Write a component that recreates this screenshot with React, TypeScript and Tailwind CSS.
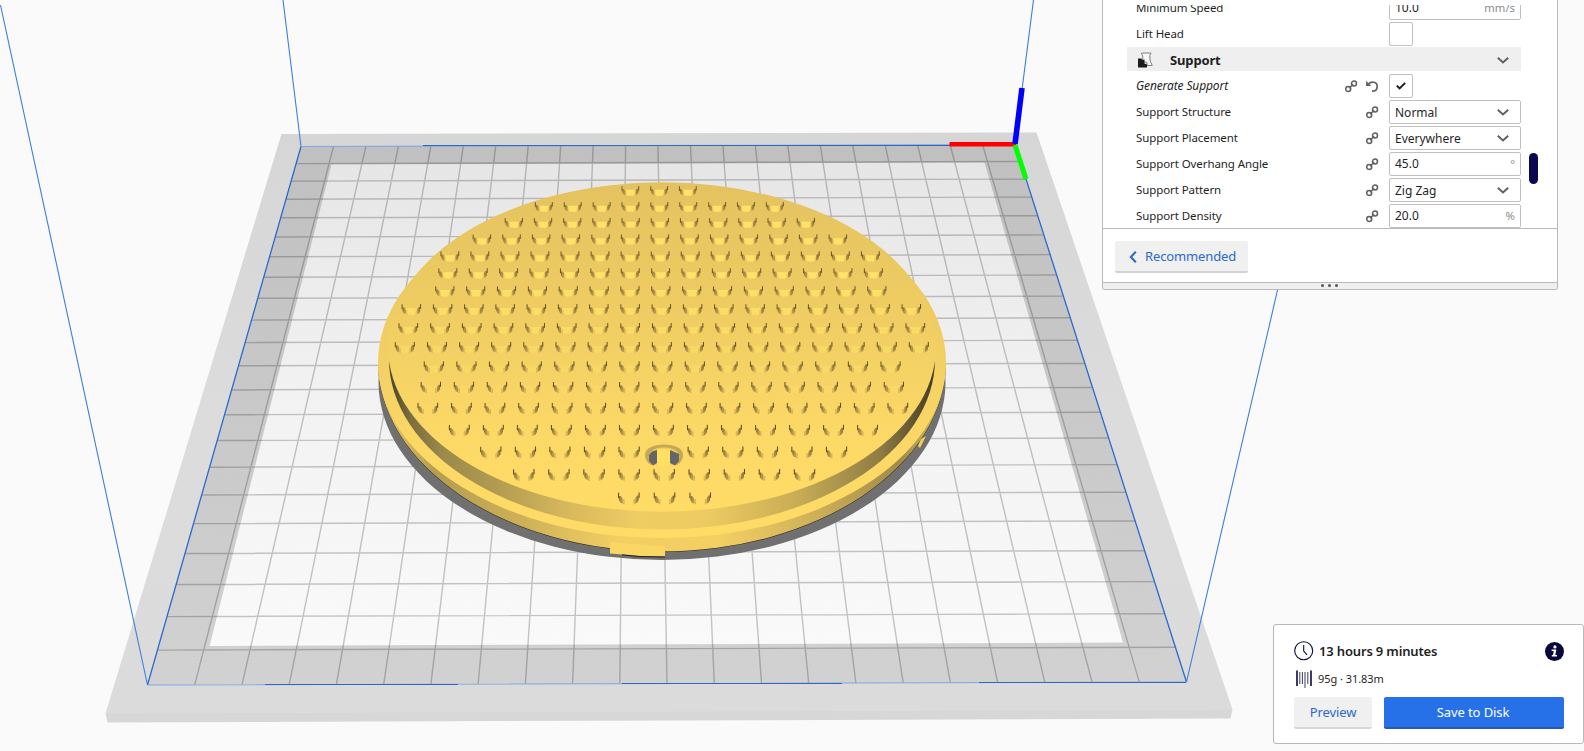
import React from "react";

type Pt = [number, number];

// Build-plate corners on screen; 22 x 22 cells of 10 mm.
const TL: Pt = [301, 146.5];
const TR: Pt = [1015, 144.5];
const BR: Pt = [1186.5, 682];
const BL: Pt = [147.5, 685];
const CELLS = 22;

function makeProjector(p0: Pt, p1: Pt, p2: Pt, p3: Pt) {
  const dx1 = p1[0] - p2[0];
  const dx2 = p3[0] - p2[0];
  const dx3 = p0[0] - p1[0] + p2[0] - p3[0];
  const dy1 = p1[1] - p2[1];
  const dy2 = p3[1] - p2[1];
  const dy3 = p0[1] - p1[1] + p2[1] - p3[1];
  const den = dx1 * dy2 - dx2 * dy1;
  const g = (dx3 * dy2 - dx2 * dy3) / den;
  const h = (dx1 * dy3 - dx3 * dy1) / den;
  const a = p1[0] - p0[0] + g * p1[0];
  const b = p3[0] - p0[0] + h * p3[0];
  const d = p1[1] - p0[1] + g * p1[1];
  const e = p3[1] - p0[1] + h * p3[1];
  return (u: number, v: number): Pt => {
    const w = g * u + h * v + 1;
    return [(a * u + b * v + p0[0]) / w, (d * u + e * v + p0[1]) / w];
  };
}

const project = makeProjector(TL, TR, BR, BL);

function gridPath(step: number) {
  let d = "";
  for (let i = step; i < CELLS - 0.001; i += step) {
    const t = i / CELLS;
    const [ax, ay] = project(t, 0);
    const [bx, by] = project(t, 1);
    const [cx, cy] = project(0, t);
    const [ex, ey] = project(1, t);
    d += `M${ax.toFixed(1)} ${ay.toFixed(1)}L${bx.toFixed(1)} ${by.toFixed(1)}`;
    d += `M${cx.toFixed(1)} ${cy.toFixed(1)}L${ex.toFixed(1)} ${ey.toFixed(1)}`;
  }
  return d;
}

// y, first x, last x, count
const PIN_ROWS: [number, number, number, number][] = [
  [191, 630.5, 688, 3],
  [207, 544, 775, 9],
  [223, 514, 806, 11],
  [239.5, 482, 838, 13],
  [256.5, 450, 870.5, 15],
  [273.5, 448, 873.5, 15],
  [291.5, 445, 877, 15],
  [309.5, 411.5, 911.5, 17],
  [328.5, 408.5, 915.5, 17],
  [347.5, 405, 919, 17],
  [367, 434, 890.7, 15],
  [387.5, 431, 894, 15],
  [408.5, 428, 898, 15],
  [430.5, 459.5, 867.7, 13],
  [452.5, 491, 836.7, 11],
  [475, 524, 804.7, 9],
  [498.5, 629, 700.4, 3],
];

function Pin({ x, y, s, t }: { x: number; y: number; s: number; t: number }) {
  return (
    <g transform={`translate(${x.toFixed(1)} ${y.toFixed(1)}) scale(${s.toFixed(2)})`}>
      <path d="M-4.800-1.300H4.800V3.400L3 4.800H-3L-4.800 3.400Z" fill="#ffe268" opacity={1 - t * 0.8} />
      <path d="M-6.200 0.600H-3.600V4.800H-5L-6.200 3.800Z" fill="#d3b056" opacity={0.25 + t * 0.6} />
      <path d="M6.200 0.600H3.600V4.800H5L6.200 3.800Z" fill="#d3b056" opacity={0.25 + t * 0.6} />
      <path d="M-8.200-2H-6.900L-5.400-0.500V3.800H-6.800L-8.200 2Z" fill="#b0924a" />
      <path d="M8-2.400H6.900L5.400-0.700V3.600H6.800L8 1.800Z" fill="#a88b45" />
      <path d="M-8.700-4.800V-0.200M8.400-5V-0.600" stroke="#5d4c28" strokeWidth={0.9} fill="none" />
      <path d="M-7.700-1.800V1.400M7.400-2.200V1.200" stroke="#8a7138" strokeWidth={0.9} fill="none" />
    </g>
  );
}

function Scene() {
  return (
    <svg className="block h-[751px] w-[1584px]" viewBox="0 0 1584 751">
      <defs>
        <linearGradient id="rim" x1="0" y1="0" x2="0" y2="1">
          <stop offset="0" stopColor="#d6d6d6" />
          <stop offset="0.5" stopColor="#dcdcdc" />
          <stop offset="1" stopColor="#dbdbdb" />
        </linearGradient>
        <linearGradient id="edge" x1="0" y1="0" x2="0" y2="1">
          <stop offset="0" stopColor="#c1c1c1" />
          <stop offset="1" stopColor="#d2d2d2" />
        </linearGradient>
        <linearGradient id="bed" x1="0" y1="0" x2="0" y2="1">
          <stop offset="0" stopColor="#e7e7e7" />
          <stop offset="0.5" stopColor="#f3f3f3" />
          <stop offset="1" stopColor="#fafafa" />
        </linearGradient>
        <linearGradient id="top" x1="0" y1="0" x2="0" y2="1">
          <stop offset="0" stopColor="#e4c25f" />
          <stop offset="0.5" stopColor="#f2d063" />
          <stop offset="0.75" stopColor="#fcd866" />
          <stop offset="1" stopColor="#ffdc66" />
        </linearGradient>
        <linearGradient id="wall" x1="0" y1="0" x2="1" y2="0">
          <stop offset="0" stopColor="#4a4228" />
          <stop offset="0.04" stopColor="#7c6e3e" />
          <stop offset="0.1" stopColor="#9b8a4b" />
          <stop offset="0.2" stopColor="#b39c51" />
          <stop offset="0.33" stopColor="#d8b95c" />
          <stop offset="0.46" stopColor="#f0cd63" />
          <stop offset="0.58" stopColor="#eecb62" />
          <stop offset="0.75" stopColor="#c8ac55" />
          <stop offset="0.9" stopColor="#8e7c43" />
          <stop offset="1" stopColor="#453d24" />
        </linearGradient>
        <linearGradient id="side" x1="0" y1="0" x2="1" y2="0">
          <stop offset="0" stopColor="#f3cf63" />
          <stop offset="0.1" stopColor="#b59d50" />
          <stop offset="0.25" stopColor="#cdb057" />
          <stop offset="0.42" stopColor="#f2ce63" />
          <stop offset="0.6" stopColor="#f4d063" />
          <stop offset="0.78" stopColor="#cbae57" />
          <stop offset="0.92" stopColor="#a08a48" />
          <stop offset="1" stopColor="#e6c45f" />
        </linearGradient>
      </defs>
      <rect width="1584" height="751" fill="#fafafa" />
      <path d="M105.500 713L107.500 722.500L1230.500 718.500L1232.500 709Z" fill="#d7d7d7" />
      <path d="M281.500 134L1036.500 132.500L1232.500 709.500L105.500 713.500Z" fill="url(#rim)" />
      <path d="M301 146.500L1015 144.500L1186.500 682L147.500 685Z" fill="url(#edge)" />
      <path d="M331.500 164.500L984.500 162.500L1123 642.500L209.500 646Z" fill="url(#bed)" />
      <path d={gridPath(0.1)} stroke="#000" strokeOpacity="0.016" strokeWidth="0.6" fill="none" />
      <path d={gridPath(1)} stroke="#000" strokeOpacity="0.21" strokeWidth="1.45" fill="none" />

      <g fill="none" stroke="#3b7fdb" strokeWidth="1.1">
        <path d="M0.500 5L147.500 685M283 0L301 146.500M1033.500 0L1015 144.500M1278 288L1186.500 682" />
        <path d="M301 146.500L147.500 685M1015 144.500L1186.500 682" stroke="#2d69c9" strokeWidth="1.300" />
        <path d="M301 146.500L1015 144.500M147.500 685L1186.500 682" stroke="#7ba8e6" />
        <path d="M423 145.500H950M265 684.500H458M622 683.500H842M979 682.500H1186" stroke="#3067c0" />
      </g>

      <path d="M949.500 144.300H1016" stroke="#ff0000" strokeWidth="4.400" />
      <path d="M1015 145L1026 179" stroke="#00ff00" strokeWidth="5" />
      <path d="M1015 144L1022 88" stroke="#0000fb" strokeWidth="5.600" />

      <ellipse cx="662" cy="382" rx="283.500" ry="178" fill="#707070" />
      <path d="M378 361.500A284 190.500 0 0 0 946 361.500Z" fill="#201c12" />
      <path d="M378 361A284 190.500 0 0 0 946 361Z" fill="url(#side)" />
      <ellipse cx="662" cy="362.500" rx="284" ry="175.500" fill="url(#top)" />
      <ellipse cx="662" cy="359" rx="273" ry="170.500" fill="url(#wall)" />
      <ellipse cx="662" cy="347" rx="274" ry="164.700" fill="url(#top)" />
      <path d="M610 542L665 546.500V556.500L640 556L610 553.500Z" fill="#fad664" />
      <path d="M622 554.800L640 556.600L665 557" stroke="#201c12" fill="none" />
      <path d="M918 446L921 439L926 436L920 448Z" fill="#f2cf63" />

      {PIN_ROWS.map(([y, x0, x1, n], r) =>
        Array.from({ length: n }, (_, i) =>
          r === 14 && i === 5 ? null : (
            <Pin
              key={`${r}-${i}`}
              x={x0 + ((x1 - x0) * i) / (n - 1)}
              y={y}
              s={0.98 + r * 0.014}
              t={Math.min(1, Math.max(0, (r - 5) / 7))}
            />
          ),
        ),
      )}

      <path d="M645 455C645 448 654 444.500 664 444.500C674 444.500 683 448 683 455C683 460 680 463 677 465L651 465C648 463 645 460 645 455Z" fill="#c3a855" />
      <path d="M648.500 458C649 450 656 447.500 664 447.500C672 447.500 679 450 679.500 458L676 465H652Z" fill="#efcd62" />
      <path d="M649 455L652 451.500L657 450V463L653 465.500L649 461Z" fill="#666" />
      <path d="M670 450L679 454V461L675 465.500L670 463Z" fill="#666" />
      <path d="M657 449H670V466H657Z" fill="#ffe060" />
    </svg>
  );
}

function LinkIcon() {
  return (
    <svg className="size-[13px] shrink-0" viewBox="0 0 13 13" fill="none" stroke="#5f6062" strokeWidth="1.500">
      <circle cx="3.200" cy="9" r="2.500" />
      <circle cx="9" cy="3.600" r="2.500" />
      <path d="M4 8.300L8.200 4.300" strokeWidth="1.500" />
    </svg>
  );
}

function ResetIcon() {
  return (
    <svg className="size-[13px] shrink-0" viewBox="0 0 13 13" fill="none">
      <path d="M2.500 3.900C5 1.200 11.200 1.300 11.200 6.400C11.200 9.600 9 11.200 6 11.200" stroke="#5f6062" strokeWidth="1.700" />
      <path d="M0.100 0.800V6H5.200Z" fill="#5f6062" />
    </svg>
  );
}

function Chevron() {
  return (
    <svg className="h-[7px] w-[12px] shrink-0" viewBox="0 0 12 7" fill="none" stroke="#5f6062" strokeWidth="2">
      <path d="M0.800 0.800L6 5.500L11.200 0.800" />
    </svg>
  );
}

function Row({
  label,
  italic,
  linked = true,
  reset,
  children,
}: {
  label: string;
  italic?: boolean;
  linked?: boolean;
  reset?: boolean;
  children: React.ReactNode;
}) {
  return (
    <div className="flex h-6 shrink-0 items-center pl-[9px]">
      <span className={italic ? "flex-1 text-[12px] tracking-[-0.12px] italic" : "flex-1 text-[11.500px] tracking-[-0.09px]"}>
        {label}
      </span>
      <span className="mr-[10px] flex gap-[8px]">
        {linked && <LinkIcon />}
        {reset && <ResetIcon />}
      </span>
      <div className="flex w-[132px]">{children}</div>
    </div>
  );
}

function Field({ value, unit, select }: { value: string; unit?: string; select?: boolean }) {
  return (
    <div
      className={
        select
          ? "flex h-6 w-full items-center justify-between rounded-[2px] border border-[#c0c0c0] bg-white pr-[11px] pl-[5px]"
          : "flex h-6 w-full items-center justify-between rounded-[2px] border border-[#c0c0c0] bg-white pr-[5px] pl-[5px]"
      }
    >
      <span className={select ? "pt-px text-[12px]" : "text-[12px]"}>{value}</span>
      {unit && <span className="text-[11.300px] text-[#8a8a8a]">{unit}</span>}
      {select && <Chevron />}
    </div>
  );
}

function Check({ on }: { on?: boolean }) {
  return (
    <span className="flex size-6 items-center justify-center rounded-[2px] border border-[#c0c0c0] bg-white">
      {on && (
        <svg className="h-2 w-2.5" viewBox="0 0 10 8" fill="none" stroke="#1c1c1c" strokeWidth="2">
          <path d="M0.800 3.600L3.600 6.400L9.200 0.900" />
        </svg>
      )}
    </span>
  );
}

function SettingsPanel() {
  return (
    <section className="absolute top-0 left-[1102px] flex h-[290px] w-[456px] flex-col overflow-hidden rounded-b-[3px] border border-t-0 border-[#b9b9b9] bg-white">
      <div className="flex h-[228px] shrink-0 overflow-hidden pt-[5px] pl-6">
        <div className="flex h-[223px] w-[394px] flex-col gap-[2px] overflow-hidden">
          <div className="-mt-[9px] flex shrink-0 flex-col">
            <Row label="Minimum Speed" linked={false}>
              <Field value="10.0" unit="mm/s" />
            </Row>
          </div>
          <Row label="Lift Head" linked={false}>
            <Check />
          </Row>
          <div className="-mt-px mb-px flex h-6 shrink-0 items-center bg-[#efefef] pr-[12px] pl-[10px]">
            <svg className="mt-px h-[16px] w-[17px]" viewBox="0 0 17 16">
              <path
                d="M4.500 1H14L12.800 3.500L13.200 9L15.300 13.500H10V10.500L5.800 9.500V5Z"
                fill="#f6f6f6"
                stroke="#777"
                strokeWidth="0.900"
              />
              <path d="M1 6.500H4.500L5.500 8L7.500 7.500V11.500L10 12.500V15.500H1Z" fill="#1c1c1c" />
            </svg>
            <span className="ml-4 flex-1 pt-[3px] text-[13px] font-bold tracking-[-0.15px]">Support</span>
            <span className="pt-[2px]">
              <Chevron />
            </span>
          </div>
          <Row label="Generate Support" italic reset>
            <Check on />
          </Row>
          <Row label="Support Structure">
            <Field value="Normal" select />
          </Row>
          <Row label="Support Placement">
            <Field value="Everywhere" select />
          </Row>
          <Row label="Support Overhang Angle">
            <Field value="45.0" unit="°" />
          </Row>
          <Row label="Support Pattern">
            <Field value="Zig Zag" select />
          </Row>
          <Row label="Support Density">
            <Field value="20.0" unit="%" />
          </Row>
        </div>
        <div className="mt-[148px] ml-[8px] h-[31px] w-[9px] rounded-full bg-[#0a0850]" />
      </div>
      <div className="flex h-[54px] shrink-0 items-start border-t border-[#b9b9b9] pt-[12px] pl-[12px]">
        <button className="flex h-8 w-[133px] items-center rounded-[2px] border-b-2 border-[#d2d2d2] bg-[#f0f0f0] pt-[2px] pl-[14px] text-[13px] tracking-[-0.13px] text-[#2a69cf]">
          <svg className="mr-[8px] h-[12px] w-[8px]" viewBox="0 0 8 12" fill="none" stroke="#2a69cf" strokeWidth="2">
            <path d="M6.800 0.800L1.800 6L6.800 11.200" />
          </svg>
          Recommended
        </button>
      </div>
      <div className="flex flex-1 items-center justify-center gap-[4px] border-t border-[#b9b9b9] bg-[#efefef] pr-[2px] pb-px">
        <i className="size-[3px] rounded-full bg-[#555]" />
        <i className="size-[3px] rounded-full bg-[#555]" />
        <i className="size-[3px] rounded-full bg-[#555]" />
      </div>
    </section>
  );
}

function JobCard() {
  return (
    <section className="absolute top-[624px] left-[1273px] flex h-[120px] w-[311px] flex-col rounded-[3px] border border-[#b9b9b9] bg-white pt-4 pr-[19px] pl-5">
      <div className="flex h-5 items-center">
        <svg className="size-5" viewBox="0 0 20 20" fill="none" stroke="#0a0840" strokeWidth="1.100">
          <circle cx="9.700" cy="9.700" r="9" />
          <path d="M9.700 4V10L13 13.800" />
        </svg>
        <span className="ml-[5px] flex-1 pt-px text-[13px] font-semibold tracking-[-0.16px] whitespace-nowrap">
          13 hours 9 minutes
        </span>
        <svg className="size-[19px]" viewBox="0 0 19 19">
          <circle cx="9.500" cy="9.500" r="9.500" fill="#08073f" />
          <g fill="#fff">
            <circle cx="9.900" cy="4.900" r="1.600" />
            <path d="M6.600 7.400H11.400L10.300 13H12V14.600H6.800V13H8L8.700 9H6.600Z" />
          </g>
        </svg>
      </div>
      <div className="mt-[8px] flex h-5 items-center">
        <svg className="ml-[2px] h-[18px] w-4" viewBox="0 0 16 18" stroke="#0a0840" fill="none">
          <path d="M1 0.500V16M15 0.500V16" strokeWidth="1.600" />
          <path d="M3.800 2V14M6.400 2V14M9 2V18M11.800 2V14" strokeWidth="1" opacity="0.800" />
        </svg>
        <span className="ml-[6px] pt-px text-[11px] tracking-[-0.05px]">95g · 31.83m</span>
      </div>
      <div className="mt-[8px] flex gap-3">
        <button className="h-8 w-[78px] rounded-[2px] border-b-2 border-[#d8d8d8] bg-[#f0f0f0] pt-[2px] text-[13px] tracking-[-0.08px] text-[#2a69cf]">
          Preview
        </button>
        <button className="h-8 w-[180px] rounded-[2px] border-b-2 border-[#2459b8] bg-[#2671e8] pt-[2px] pr-[2px] text-[13px] tracking-[-0.08px] text-white">
          Save to Disk
        </button>
      </div>
    </section>
  );
}

export default function App() {
  return (
    <main className="relative h-[751px] w-[1584px] overflow-hidden bg-[#fafafa] font-['Noto_Sans',sans-serif] text-[#1f1f1f]">
      <Scene />
      <SettingsPanel />
      <JobCard />
    </main>
  );
}
